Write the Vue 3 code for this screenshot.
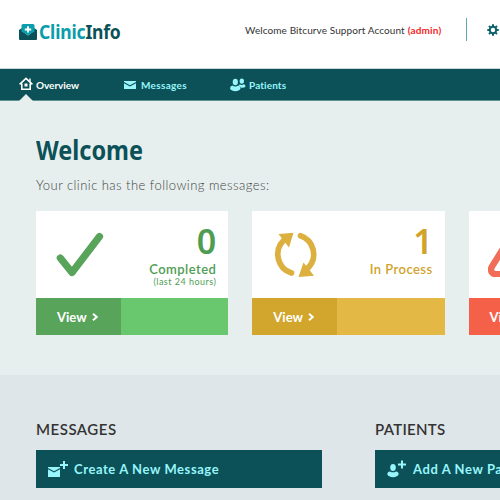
<script setup>
const cards = [
  { tone: 'green', icon: 'check', count: '0', label: 'Completed', note: '(last 24 hours)' },
  { tone: 'gold', icon: 'cycle', count: '1', label: 'In Process', note: '' },
  { tone: 'red', icon: 'alert', count: '', label: '', note: '' },
]
</script>

<template>
  <div class="page">
    <header class="top">
      <div class="brand">
        <svg class="logo" width="18" height="18" viewBox="0 0 18 18">
          <path d="M0 7l3-2v3l6 4.500L15 8V5l3 2v9a1 1 0 0 1-1 1H1a1 1 0 0 1-1-1z" fill="#0b5157" />
          <path d="M2.500 2.500A1.500 1.500 0 0 1 4 1h10a1.500 1.500 0 0 1 1.500 1.500v6L9 12.200 2.500 8.500z" fill="#0a9dab" />
          <path d="M9 3.200v6.400M5.800 6.400h6.400" stroke="#fff" stroke-width="2" />
        </svg>
        <span class="name"><span class="clinic">Clinic</span>Info</span>
      </div>
      <div class="account">
        <span class="greeting">Welcome Bitcurve Support Account</span>
        <span class="role">(admin)</span>
      </div>
      <div class="settings">
        <svg width="12" height="12" viewBox="0 0 12 12">
          <circle cx="6" cy="6" r="3.200" fill="none" stroke="#0b626b" stroke-width="2" />
          <path d="M6 .3v2M6 9.700v2M.3 6h2M9.700 6h2M2 2l1.300 1.300M8.700 8.700L10 10M10 2L8.700 3.300M3.300 8.700L2 10" stroke="#0b626b" stroke-width="2" />
        </svg>
      </div>
    </header>

    <nav class="nav">
      <a class="item overview">
        <svg class="home" width="14" height="14" viewBox="0 0 14 14" fill="none" stroke="#fff">
          <path d="M.6 7.300L7 1.400l6.400 5.900M2.800 6.500v5.700h8.400V6.500" stroke-width="1.600" />
          <path d="M11 1.600v3" stroke-width="1.400" />
          <rect x="5.500" y="6.500" width="3" height="3" fill="#fff" stroke="none" />
        </svg>
        <span>Overview</span>
      </a>
      <a class="item messages">
        <svg width="12" height="8" viewBox="0 0 12 8" fill="#97f5fb">
          <path d="M0 0h12v1L6 4.200 0 1zM0 2.200l6 3.200 6-3.200V8H0z" />
        </svg>
        <span>Messages</span>
      </a>
      <a class="item patients">
        <svg width="16" height="14" viewBox="0 0 16 14" fill="#97f5fb">
          <ellipse cx="11.800" cy="3.100" rx="2.200" ry="2.700" />
          <path d="M9.700 6.300c1 .9 2.800.9 4 0 1.300.3 1.800 1.200 1.800 2.500-1.200 1-3 1.200-4.800.7-.5-.7-1.100-1.100-2-1.400z" />
          <ellipse cx="5.300" cy="4" rx="2.600" ry="3.300" />
          <path d="M2.500 7.600c1.600 1.200 4 1.200 5.600 0 1.600.3 2.400 1.500 2.400 3.200C9.500 14 1.200 14 .1 10.800c0-1.700.8-2.900 2.400-3.200z" />
        </svg>
        <span>Patients</span>
      </a>
    </nav>

    <section class="summary">
      <h1>Welcome</h1>
      <p class="intro">Your clinic has the following messages:</p>
      <div class="cards">
        <article v-for="card in cards" :key="card.tone" class="card" :class="card.tone">
          <div class="info">
            <svg v-if="card.icon === 'check'" class="icon" width="48" height="46" viewBox="0 0 48 46" fill="none" stroke="#58a45b" stroke-width="7.200" stroke-linecap="round" stroke-linejoin="round">
              <path d="M4.300 27L16 41.500 43.500 5.500" />
            </svg>
            <svg v-else-if="card.icon === 'cycle'" class="icon" width="48" height="46" viewBox="0 0 48 46">
              <g fill="none" stroke="#dcb03f" stroke-width="5.700" stroke-linecap="round">
                <path d="M19.500 42A19.600 19.600 0 0 1 11.500 9.500" />
                <path d="M28.500 4.700A19.600 19.600 0 0 1 36.500 36.500" />
              </g>
              <path d="M6.500 3L21.500 1.700 17 16.500zM26.500 46L42 44.800 31.500 31.500z" fill="#dcb03f" />
            </svg>
            <svg v-else class="icon" width="54" height="46" viewBox="0 0 54 46" fill="none" stroke="#f26d57" stroke-width="6.400" stroke-linejoin="round">
              <path d="M23 5L4 35.500c-2.500 4 0 7.700 4 7.700h38c4 0 6.500-3.700 4-7.700L31 5c-2-3-6-3-8 0z" />
            </svg>
            <div class="figures">
              <strong class="count">{{ card.count }}</strong>
              <span class="label">{{ card.label }}</span>
              <small class="note">{{ card.note }}</small>
            </div>
          </div>
          <div class="action">
            <a class="view">
              <span>View</span>
              <svg width="6" height="8" viewBox="0 0 6 8" fill="none" stroke="#fff" stroke-width="1.900"><path d="M1 .8L4.700 4 1 7.200" /></svg>
            </a>
          </div>
        </article>
      </div>
    </section>

    <section class="lower">
      <div class="column">
        <h2 class="h-messages">MESSAGES</h2>
        <a class="button">
          <svg width="22" height="18" viewBox="0 0 22 18" fill="#97f5fb">
            <path d="M1 7h12v1L7 11.200 1 8zM1 9.200l6 3.200 6-3.200V17H1zM16 1h2v3h3v2h-3v3h-2V6h-3V4h3z" />
          </svg>
          <span class="create">Create A New Message</span>
        </a>
      </div>
      <div class="column">
        <h2 class="h-patients">PATIENTS</h2>
        <a class="button">
          <svg width="22" height="18" viewBox="0 0 22 18" fill="#97f5fb">
            <ellipse cx="7" cy="7.500" rx="2.800" ry="3.500" />
            <path d="M4 11.400c1.700 1.200 4.300 1.200 6 0 1.900.2 2.700 1.300 2.700 2.700-.6 4.200-10.800 4.200-11.400 0 0-1.400.8-2.500 2.700-2.700zM15 .5h2v3h3v2h-3v3h-2v-3h-3v-2h3z" />
          </svg>
          <span class="add">Add A New Patient</span>
        </a>
      </div>
    </section>
  </div>
</template>

<style>
body { margin: 0; overflow: hidden; }
</style>

<style scoped>
.page {
  width: 500px;
  height: 500px;
  overflow: hidden;
  background: #e6efee;
  font-family: Lato, sans-serif;
  color: #333;
}
.top {
  display: flex;
  height: 69px;
  box-sizing: border-box;
  background: #fff;
  border-bottom: 1px solid #c6d7d8;
}
.brand { display: flex; width: 245px; padding-left: 19px; box-sizing: border-box; }
.logo { margin-top: 23px; flex: none; }
.name {
  margin: 19px 0 0 2px;
  font: bold 19.500px/26px "Noto Sans", sans-serif;
  letter-spacing: -.2px;
  transform: scaleX(.9);
  transform-origin: left;
  color: #0b5157;
}
.clinic { color: #0a9dab; }
.account { display: flex; width: 221px; padding-top: 24px; font-size: 10px; line-height: 13px; white-space: nowrap; }
.greeting { letter-spacing: .1px; margin-right: 3px; }
.role { color: #f51f27; font-weight: bold; letter-spacing: .15px; }
.settings { height: 23px; margin-top: 18px; padding: 6px 0 0 20px; border-left: 1px solid #5fa9b4; box-sizing: border-box; }
.settings svg { display: block; }
.nav { display: flex; height: 32px; background: #0b5157; border-bottom: 1px solid #5f9093; box-sizing: border-box; color: #97f5fb; }
.item { display: flex; align-items: center; box-sizing: border-box; height: 31px; font-size: 10px; font-weight: bold; white-space: nowrap; letter-spacing: .2px; }
.overview { position: relative; width: 124px; padding-left: 19px; gap: 3px; color: #fff; letter-spacing: -.05px; }
.home { margin-top: -2px; }
.overview::after {
  content: "";
  position: absolute;
  left: 19px;
  bottom: -1px;
  border: 7px solid transparent;
  border-top: 0;
  border-bottom-color: #e6efee;
}
.messages { width: 106px; gap: 5px; letter-spacing: .3px; }
.patients { gap: 3px; letter-spacing: .1px; }
.summary { height: 274px; padding: 30px 0 0 36px; box-sizing: border-box; }
h1 { margin: 0; font: bold 27px/38px "Noto Sans", sans-serif; transform: scaleX(.87); transform-origin: left; color: #0b5157; }
.intro { margin: 7px 0 0; font-size: 13px; line-height: 18px; font-weight: 300; letter-spacing: .46px; color: #444; }
.cards { display: flex; gap: 24px; width: 640px; margin-top: 17px; }
.card { width: 192.300px; height: 124px; flex: none; background: #fff; }
.info { display: flex; justify-content: space-between; height: 87px; box-sizing: border-box; padding: 20px 12px 0 20px; }
.red .info { padding-left: 19px; }
.icon { flex: none; }
.figures { display: flex; flex-direction: column; align-items: flex-end; margin-top: -8px; }
.count { font: 600 34px/36px "Noto Sans", sans-serif; }
.label { font-size: 13px; line-height: 16px; margin-top: 2px; font-weight: 600; letter-spacing: .45px; white-space: nowrap; }
.note { font-size: 9px; line-height: 10px; letter-spacing: .48px; white-space: nowrap; }
.action { display: flex; height: 37px; }
.view { display: flex; align-items: center; gap: 5px; width: 85px; padding-left: 21px; box-sizing: border-box; color: #fff; font-size: 13px; font-weight: bold; }
.green { color: #4f9d53; }
.green .action { background: #69c76e; }
.green .view { background: #58a45b; }
.gold { color: #d0a32b; }
.gold .action { background: #e3b844; }
.gold .view { background: #d2a62c; }
.red .action { background: #f76249; }
.red .view { background: #f46148; }
.lower { display: grid; grid-template-columns: 286px 286px; gap: 53px; height: 125px; padding: 44px 0 0 36px; box-sizing: border-box; background: #dee6e9; }
h2 { margin: 0; font: 600 15px/20px Lato, sans-serif; letter-spacing: .3px; color: #333; }
.h-messages { letter-spacing: .5px; }
.button { display: flex; align-items: center; gap: 5px; height: 38px; margin-top: 11px; padding-left: 11px; background: #0b5157; color: #97f5fb; font-size: 13px; font-weight: bold; letter-spacing: .58px; white-space: nowrap; }
</style>
